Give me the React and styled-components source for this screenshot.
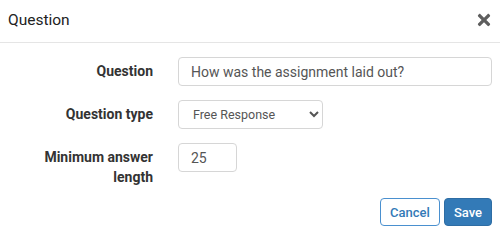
import styled, { createGlobalStyle } from "styled-components"
import { FaTimes } from "react-icons/fa"

const Global = createGlobalStyle`
    body{
        margin: 0;
        background: #fff;
        font-family: Roboto, "Liberation Sans", Arial, sans-serif;
        color: #333;
    }
    *{
        box-sizing: border-box;
    }
`

const Modal = styled.div`
    width: 500px;
    height: 235px;
    background: #fff;
`

const Header = styled.div`
    display: flex;
    align-items: center;
    justify-content: space-between;
    height: 43px;
    padding: 0 7px 2px 8px;
    border-bottom: 1px solid #e5e5e5;

    h4{
        margin: 0;
        font-size: 15.5px;
        font-weight: 400;
        color: #222;
    }
`

const Close = styled.button`
    display: flex;
    align-items: center;
    background: none;
    border: none;
    padding: 0;
    color: #5e5e5e;
    cursor: pointer;
`

const Body = styled.div`
    padding: 14px 8px 0 8px;
`

const Form = styled.div`
    display: grid;
    grid-template-columns: 145px 1fr;
    column-gap: 25px;
    row-gap: 14px;
    align-items: start;
`

const Label = styled.label`
    text-align: right;
    font-size: 14px;
    font-weight: 700;
    line-height: 20px;
    padding-top: 4px;
    color: #333;
`

const Field = styled.input`
    width: ${p => p.$width || "100%"};
    height: 29px;
    padding: 0 12px;
    font-family: inherit;
    font-size: 14px;
    color: #555;
    border: 1px solid #d6d6d6;
    border-radius: 4px;
    outline: none;
`

const Select = styled.select`
    width: 145px;
    height: 29px;
    padding: 0 8px 0 10px;
    font-family: inherit;
    font-size: 12.5px;
    color: #555;
    background: #fff;
    border: 1px solid #d6d6d6;
    border-radius: 4px;
    outline: none;
`

const Footer = styled.div`
    display: flex;
    justify-content: flex-end;
    gap: 4px;
    margin-top: 11px;
    padding-right: 0;
`

const Button = styled.button`
    height: 28px;
    padding: 0 9px;
    font-family: inherit;
    font-size: 13px;
    font-weight: 500;
    border-radius: 4px;
    cursor: pointer;
    border: 1px solid ${p => p.$primary ? "#2e6da4" : "#4a90cf"};
    background: ${p => p.$primary ? "#337ab7" : "#fff"};
    color: ${p => p.$primary ? "#fff" : "#337ab7"};
`

export default function App() {
    return (
        <Modal>
            <Global />
            <Header>
                <h4>Question</h4>
                <Close aria-label="Close"><FaTimes size={18} /></Close>
            </Header>
            <Body>
                <Form>
                    <Label>Question</Label>
                    <Field defaultValue="How was the assignment laid out?" />

                    <Label>Question type</Label>
                    <Select defaultValue="free">
                        <option value="free">Free Response</option>
                        <option value="choice">Multiple Choice</option>
                    </Select>

                    <Label>Minimum answer length</Label>
                    <Field $width="59px" defaultValue="25" />
                </Form>
                <Footer>
                    <Button>Cancel</Button>
                    <Button $primary>Save</Button>
                </Footer>
            </Body>
        </Modal>
    )
}
